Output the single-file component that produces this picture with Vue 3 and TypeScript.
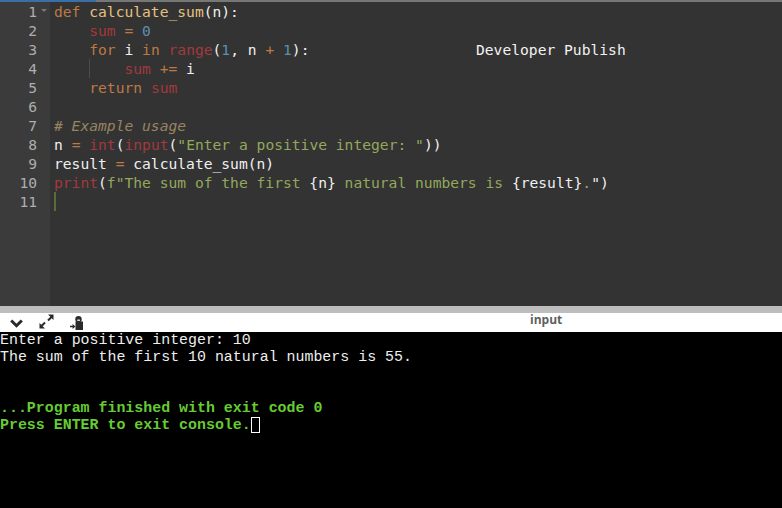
<script setup lang="ts">
type Tok = { t: string; c: string }
const k = 'kw', f = 'fn', v = 'var', n = 'num', p = 'pl', s = 'str', b = 'bi', o = 'op', m = 'com'
const lines: Tok[][] = [
  [{ t: 'def', c: k }, { t: ' ', c: p }, { t: 'calculate_sum', c: f }, { t: '(n):', c: p }],
  [{ t: '    ', c: p }, { t: 'sum', c: v }, { t: ' = ', c: o }, { t: '0', c: n }],
  [{ t: '    ', c: p }, { t: 'for', c: k }, { t: ' i ', c: p }, { t: 'in', c: k }, { t: ' ', c: p }, { t: 'range', c: b }, { t: '(', c: p }, { t: '1', c: n }, { t: ', n ', c: p }, { t: '+', c: o }, { t: ' ', c: p }, { t: '1', c: n }, { t: '):', c: p }],
  [{ t: '        ', c: p }, { t: 'sum', c: v }, { t: ' += ', c: o }, { t: 'i', c: p }],
  [{ t: '    ', c: p }, { t: 'return', c: k }, { t: ' ', c: p }, { t: 'sum', c: v }],
  [],
  [{ t: '# Example usage', c: m }],
  [{ t: 'n ', c: p }, { t: '=', c: o }, { t: ' ', c: p }, { t: 'int', c: b }, { t: '(', c: p }, { t: 'input', c: b }, { t: '(', c: p }, { t: '"Enter a positive integer: "', c: s }, { t: '))', c: p }],
  [{ t: 'result ', c: p }, { t: '=', c: o }, { t: ' calculate_sum(n)', c: p }],
  [{ t: 'print', c: b }, { t: '(', c: p }, { t: 'f"The sum of the first ', c: s }, { t: '{n}', c: p }, { t: ' natural numbers is ', c: s }, { t: '{result}', c: p }, { t: '.', c: s }, { t: '")', c: p }],
  []
]
</script>

<template>
  <div class="page">
    <div class="topline"><div class="topline-blue"></div></div>
    <section class="editor">
      <div class="gutter">
        <div v-for="(_, i) in lines" :key="i" class="num-row">
          {{ i + 1 }}
          <span v-if="i === 0" class="fold"></span>
        </div>
      </div>
      <div class="code">
        <div v-for="(line, i) in lines" :key="i" class="code-row">
          <span v-for="(tok, j) in line" :key="j" :class="tok.c">{{ tok.t }}</span>
          <span v-if="i === 10" class="caret"></span>
          <span v-if="i === 3" class="indent-guide"></span>
        </div>
        <div class="brand">Developer Publish</div>
      </div>
    </section>
    <div class="splitter"></div>
    <div class="toolbar">
      <div class="tools">
        <svg class="ic-chevron" width="13" height="9" viewBox="0 0 13 9"><path d="M1.200 1.500 6.500 6.700 11.800 1.500" fill="none" stroke="#2a2a2a" stroke-width="3" /></svg>
        <svg class="ic-expand" width="15" height="15" viewBox="0 0 15 15"><path d="M9 .5h5.500V6l-1.800-1.800-3 3-1.400-1.400 3-3zM6 14.500H.5V9l1.800 1.800 3-3 1.400 1.400-3 3z" fill="#2a2a2a" /></svg>
        <svg class="ic-stop" width="14" height="14" viewBox="0 0 14 14"><circle cx="8.500" cy="3.300" r="3.200" fill="#2a2a2a" /><path d="M5.500 5.500h7.500v8.500H5.500z" fill="#2a2a2a" /><path d="M7.200 3.600h2.800v1.200H7.200z" fill="#fff" /><path d="M0 9.700h2.600V8l2.800 2.500L2.600 13v-1.700H0z" fill="#2a2a2a" /></svg>
      </div>
      <span class="input-label">input</span>
    </div>
    <section class="terminal">
      <div class="term-row">Enter a positive integer: 10</div>
      <div class="term-row">The sum of the first 10 natural numbers is 55.</div>
      <div class="term-row"></div>
      <div class="term-row"></div>
      <div class="term-row green">...Program finished with exit code 0</div>
      <div class="term-row green">Press ENTER to exit console.<span class="cursor"></span></div>
    </section>
  </div>
</template>

<style scoped>
.page {
  width: 782px;
  height: 508px;
  display: flex;
  flex-direction: column;
  overflow: hidden;
  background: #000;
}
.topline {
  height: 2px;
  background: #777;
  flex: none;
}
.topline-blue {
  width: 96px;
  height: 100%;
  background: #3a6ea5;
}
.editor {
  height: 304px;
  flex: none;
  display: flex;
  background: #333;
  font: 14.64px/19px "DejaVu Sans Mono", monospace;
  color: #eee;
}
.gutter {
  width: 50px;
  flex: none;
  background: #3b3b3b;
  padding-right: 13px;
  box-sizing: border-box;
  color: #aeaeae;
  text-align: right;
}
.num-row {
  height: 19px;
  position: relative;
}
.fold {
  position: absolute;
  left: 41px;
  top: 7px;
  border-left: 3px solid transparent;
  border-right: 3px solid transparent;
  border-top: 3px solid #777;
}
.code {
  flex: 1;
  padding-left: 4px;
  position: relative;
}
.code-row {
  height: 19px;
  white-space: pre;
  position: relative;
}
.kw { color: #bd7a45; }
.fn { color: #e6c17f; }
.var { color: #a2393c; }
.num { color: #5c90b0; }
.pl { color: #f0f0f0; }
.str { color: #93a85c; }
.bi { color: #a2393c; }
.op { color: #bd7a45; }
.com { color: #978460; font-style: italic; }
.caret {
  position: absolute;
  left: 0;
  top: 0;
  width: 2px;
  height: 19px;
  background: #5c6b3a;
}
.indent-guide {
  position: absolute;
  left: 35px;
  top: 0;
  width: 1px;
  height: 19px;
  background: #4c4c4c;
}
.brand {
  position: absolute;
  left: 426px;
  top: 38px;
  color: #f2f2f2;
}
.splitter {
  height: 7px;
  flex: none;
  background: #bdbdbd;
}
.toolbar {
  height: 19px;
  flex: none;
  background: #fff;
  position: relative;
  display: flex;
}
.tools {
  display: flex;
  align-items: flex-start;
  padding-left: 10px;
}
.ic-chevron { margin-top: 6px; }
.ic-expand { margin: 1px 0 0 16px; }
.ic-stop { margin: 3px 0 0 16px; }
.input-label {
  position: absolute;
  left: 530px;
  top: -1px;
  font: bold 12px/16px "Open Sans", sans-serif;
  color: #5f5f5f;
}
.terminal {
  flex: 1;
  background: #000;
  color: #eee;
  font: 14.93px/17px "Liberation Mono", monospace;
}
.term-row {
  height: 17px;
  white-space: pre;
}
.green {
  color: #66cc33;
  font-weight: bold;
}
.cursor {
  display: inline-block;
  width: 7px;
  height: 14px;
  border: 1px solid #fff;
  vertical-align: -4px;
}
</style>
